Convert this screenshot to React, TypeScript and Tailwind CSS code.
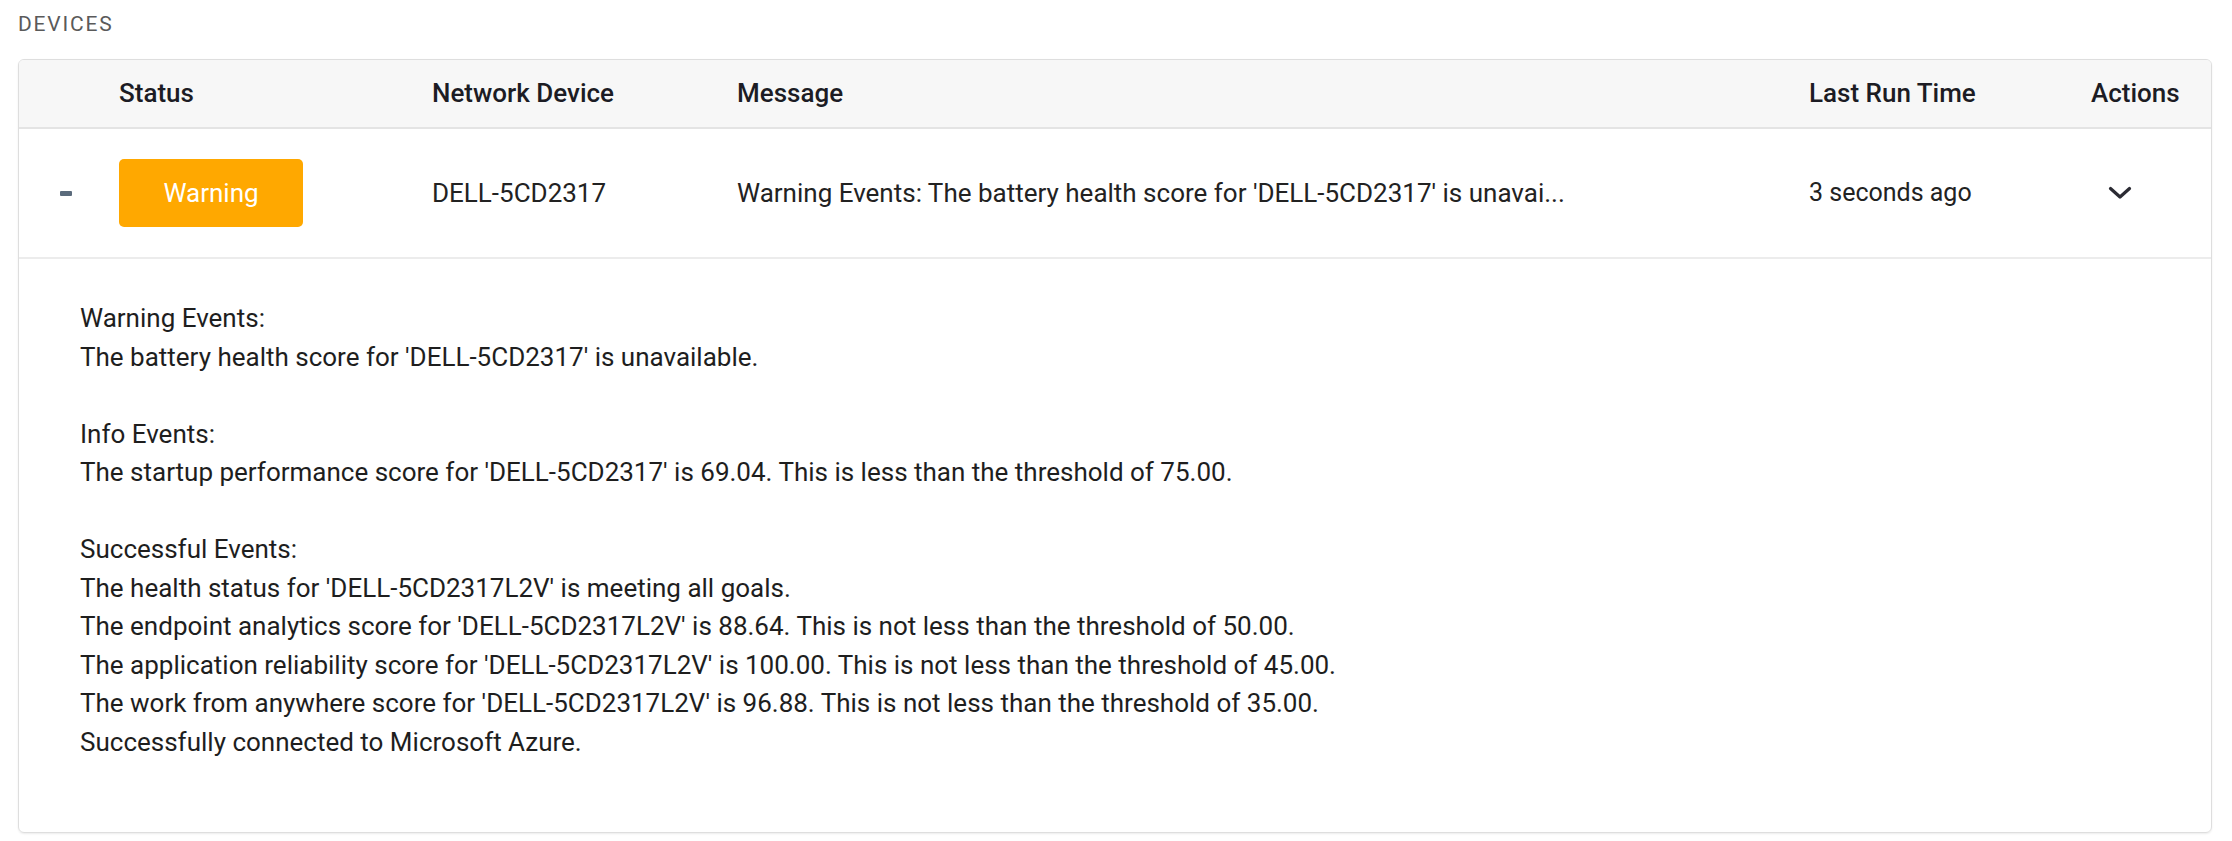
import React from 'react';

const detailLines = [
  'Warning Events:',
  "The battery health score for 'DELL-5CD2317' is unavailable.",
  '',
  'Info Events:',
  "The startup performance score for 'DELL-5CD2317' is 69.04. This is less than the threshold of 75.00.",
  '',
  'Successful Events:',
  "The health status for 'DELL-5CD2317L2V' is meeting all goals.",
  "The endpoint analytics score for 'DELL-5CD2317L2V' is 88.64. This is not less than the threshold of 50.00.",
  "The application reliability score for 'DELL-5CD2317L2V' is 100.00. This is not less than the threshold of 45.00.",
  "The work from anywhere score for 'DELL-5CD2317L2V' is 96.88. This is not less than the threshold of 35.00.",
  'Successfully connected to Microsoft Azure.',
];

const cols = 'grid grid-cols-[100px_313px_305px_1072px_282px_1fr]';

export default function App() {
  return (
    <div className="min-h-screen bg-white px-[18px] pt-[13px] font-['Roboto',sans-serif] text-[#222]">
      {/* Section label */}
      <div className="text-[21px] leading-[22px] tracking-[1.8px] text-[#5a5a5a]">DEVICES</div>

      <div className="mt-[24px] w-[2194px] overflow-hidden rounded-md border border-[#dedede] shadow-[0_1px_2px_rgba(0,0,0,0.08)]">
        {/* Header */}
        <div className={`${cols} h-[69px] items-center border-b-2 border-[#e4e4e4] bg-[#f7f7f7] text-[26px] font-medium text-[#1c1c24]`}>
          <div />
          <div>Status</div>
          <div>Network Device</div>
          <div>Message</div>
          <div>Last Run Time</div>
          <div>Actions</div>
        </div>

        {/* Row */}
        <div className={`${cols} h-[130px] items-center border-b-2 border-[#ececec] text-[26px]`}>
          <div className="flex justify-center">
            <div className="mr-[6px] h-[5px] w-[12px] rounded-[1px] bg-[#5b6b7c]" />
          </div>
          <div>
            <div className="flex h-[68px] w-[184px] items-center justify-center rounded-[5px] bg-[#ffa800] text-[26px] text-white">
              Warning
            </div>
          </div>
          <div>DELL-5CD2317</div>
          <div className="whitespace-nowrap">Warning Events: The battery health score for 'DELL-5CD2317' is unavai...</div>
          <div className="text-[25px]">3 seconds ago</div>
          <div className="flex pl-[17px]">
            <svg width="24" height="14" viewBox="0 0 24 14" fill="none">
              <path d="M2.5 2.5 L12 11 L21.5 2.5" stroke="#2b2b33" strokeWidth="3.2" strokeLinecap="round" strokeLinejoin="round" />
            </svg>
          </div>
        </div>

        {/* Expanded details */}
        <div className="pl-[61px] pt-[40px] pb-[71px] text-[26px] leading-[38.5px] text-[#1e1e1e]">
          {detailLines.map((line, i) =>
            line ? <div key={i}>{line}</div> : <div key={i} className="h-[38.5px]" />
          )}
        </div>
      </div>
    </div>
  );
}
